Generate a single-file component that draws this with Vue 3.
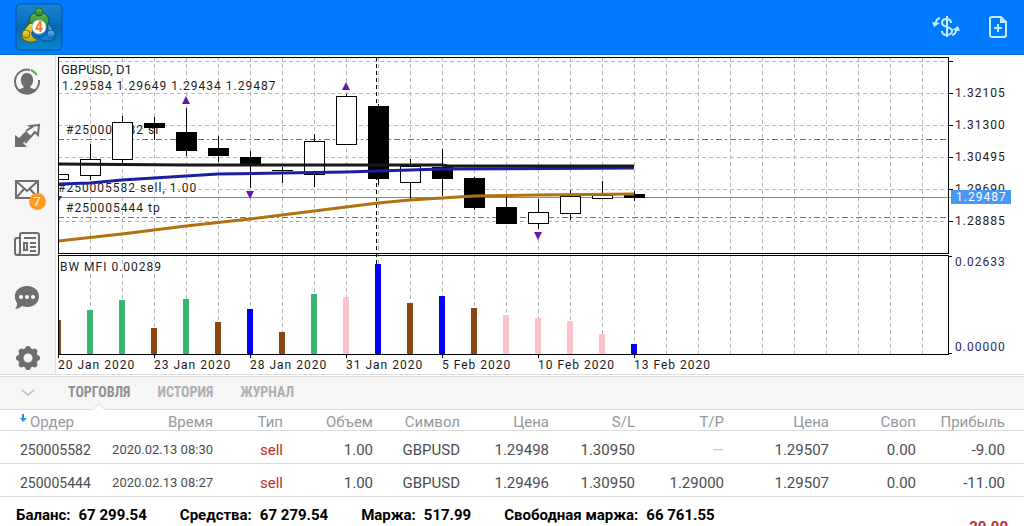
<script setup>
const candles = [
  { x: 58, top: 174, bottom: 179, up: true, high: 174, low: 179 },
  { x: 90, top: 159, bottom: 175, up: true, high: 144, low: 179 },
  { x: 122, top: 122, bottom: 159, up: true, high: 116, low: 163 },
  { x: 154, top: 123, bottom: 127, up: false, high: 117, low: 139 },
  { x: 186, top: 132, bottom: 150, up: false, high: 108, low: 155 },
  { x: 218, top: 148, bottom: 155, up: false, high: 136, low: 161 },
  { x: 250, top: 157, bottom: 164, up: false, high: 151, low: 187 },
  { x: 282, top: 170, bottom: 170, up: false, high: 167, low: 182 },
  { x: 314, top: 141, bottom: 174, up: true, high: 134, low: 186 },
  { x: 346, top: 96, bottom: 144, up: true, high: 94, low: 144 },
  { x: 378, top: 106, bottom: 178, up: false, high: 104, low: 184 },
  { x: 410, top: 166, bottom: 182, up: true, high: 159, low: 198 },
  { x: 442, top: 167, bottom: 178, up: false, high: 149, low: 195 },
  { x: 474, top: 178, bottom: 207, up: false, high: 177, low: 209 },
  { x: 506, top: 207, bottom: 223, up: false, high: 197, low: 223 },
  { x: 538, top: 212, bottom: 223, up: true, high: 199, low: 228 },
  { x: 570, top: 196, bottom: 213, up: true, high: 190, low: 219 },
  { x: 602, top: 195, bottom: 198, up: true, high: 181, low: 198 },
  { x: 634, top: 194, bottom: 197, up: false, high: 191, low: 200 },
]

const green = '#3cb371'
const brown = '#8b4513'
const blue = '#0000ff'
const pink = '#ffc0cb'
const volumes = [
  [320, brown], [310, green], [300, green], [328, brown], [299, green],
  [322, brown], [309, blue], [332, brown], [294, green], [297, pink],
  [264, blue], [303, brown], [296, blue], [308, brown], [315, pink],
  [318, pink], [321, pink], [334, pink], [344, blue],
].map(([y, color], i) => ({ x: 55 + i * 32, y, color }))

const gridX = Array.from({ length: 27 }, (_, i) => 90 + i * 32)
const gridY = Array.from({ length: 6 }, (_, i) => 61 + i * 32)

const prices = ['1.32105', '1.31300', '1.30495', '1.29690', '1.28885']
const dates = ['20 Jan 2020', '23 Jan 2020', '28 Jan 2020', '31 Jan 2020', '5 Feb 2020', '10 Feb 2020', '13 Feb 2020']

const fractals = [
  'M182 104h8l-4-8z', 'M342 90h8l-4-8z',
  'M54 196h8l-4 7z', 'M246 191h8l-4 8z', 'M534 232h8l-4 8z',
]

const teeth = Array.from({ length: 8 }, (_, i) => i * 45)

const widths = [98, 123, 70, 90, 87, 89, 86, 89, 105, 87, 100]
const headings = ['Ордер', 'Время', 'Тип', 'Объем', 'Символ', 'Цена', 'S/L', 'T/P', 'Цена', 'Своп', 'Прибыль']
const orders = [
  ['250005582', '2020.02.13 08:30', 'sell', '1.00', 'GBPUSD', '1.29498', '1.30950', '—', '1.29507', '0.00', '-9.00'],
  ['250005444', '2020.02.13 08:27', 'sell', '1.00', 'GBPUSD', '1.29496', '1.30950', '1.29000', '1.29507', '0.00', '-11.00'],
]
const summary = [
  ['Баланс:', '67 299.54'], ['Средства:', '67 279.54'],
  ['Маржа:', '517.99'], ['Свободная маржа:', '66 761.55'],
]
</script>

<template>
  <div class="app">
    <header class="topbar">
      <svg class="logo" width="48" height="48" viewBox="0 0 48 48" role="img" aria-label="MetaTrader 4">
        <defs>
          <linearGradient id="tile" x1="0" y1="0" x2="0" y2="1">
            <stop offset="0" stop-color="#1786d2" /><stop offset=".55" stop-color="#0867b4" /><stop offset="1" stop-color="#0788cf" />
          </linearGradient>
          <linearGradient id="leaf" x1="0" y1="0" x2="0" y2="1">
            <stop offset="0" stop-color="#69bd4a" /><stop offset="1" stop-color="#187b35" />
          </linearGradient>
          <linearGradient id="sun" x1="0" y1="0" x2="0" y2="1">
            <stop offset="0" stop-color="#f3dc3b" /><stop offset="1" stop-color="#b8a51c" />
          </linearGradient>
          <linearGradient id="water" x1="0" y1="0" x2="0" y2="1">
            <stop offset="0" stop-color="#66bdf0" /><stop offset="1" stop-color="#1671c4" />
          </linearGradient>
        </defs>
        <rect x="1" y="1" width="46" height="46" rx="4" fill="url(#tile)" stroke="#0755a5" />
        <path d="M14 26V19c0-6 4-10 10-10s10 4 10 10v7l-5-6c-3-4-7-4-10 0z" fill="url(#leaf)" stroke="#0d4f45" />
        <path d="M15 20l5 1-3 8c-1 4 2 6 6 8-4 3-10 3-14 0-4-3-3-7-1-9z" fill="url(#sun)" stroke="#35551f" />
        <path d="M33 20l6 8c4 5 1 9-5 10-4 1-8-1-11-4 7 1 9-2 10-6z" fill="url(#water)" stroke="#064f96" />
        <circle cx="24" cy="9" r="4" fill="url(#leaf)" stroke="#12663b" />
        <circle cx="11" cy="31" r="4" fill="url(#sun)" stroke="#6c741b" />
        <circle cx="36" cy="31" r="4" fill="url(#water)" stroke="#145f9f" />
        <circle cx="24" cy="24" r="7" fill="#fff" stroke="#bbc" />
        <text x="24" y="29" class="logo-mark">4</text>
      </svg>
      <div class="actions">
        <button aria-label="Торговать">
          <svg width="28" height="24" viewBox="0 0 28 24" fill="none" stroke="#c5eaff" stroke-width="2">
            <path d="M19 8c0-3-2-4-5-4s-4 2-4 4 2 3 5 4 5 2 5 4-2 4-5 4-5-1-5-4M15 1v21" />
            <path d="M8 3Q4 4 4 8M20 20q4-1 4-5" />
            <path d="M0 7l8 1-6 4zM28 16l-8-1 6-4z" fill="#c5eaff" stroke="none" />
          </svg>
        </button>
        <button aria-label="Новый ордер">
          <svg width="20" height="24" viewBox="0 0 20 24" fill="none" stroke="#c5eaff" stroke-width="2">
            <path d="M4 2h9l5 5v13q0 2-2 2H4q-2 0-2-2V4q0-2 2-2zM10 9v8M6 13h8" /><path d="M12 2v6h6z" fill="#c5eaff" stroke="none" />
          </svg>
        </button>
      </div>
    </header>

    <main class="workspace">
      <nav class="sidebar">
        <button aria-label="Счета">
          <svg width="28" height="28" viewBox="0 0 28 28">
            <path d="M17 2A12 12 0 1 0 26 14" fill="none" stroke="#6e6e6e" stroke-width="2" />
            <path d="M26 14v-2" stroke="#6e6e6e" stroke-width="2" />
            <path d="M18 2q4 2 6 5" fill="none" stroke="#45b72d" stroke-width="2" />
            <path d="M5 22c2-2 5-1 6-3-5-4-4-14 3-14s8 10 3 14c1 2 4 1 6 3q-9 8-18 0z" fill="#6e6e6e" />
          </svg>
        </button>
        <button aria-label="Торговля">
          <svg width="28" height="28" viewBox="0 0 28 28">
            <path d="M2 25V13l4 3 7-7 5 5-8 7 4 4z" fill="#6e6e6e" />
            <path d="M13 9l6-4-2-1 9-1-1 10-3-3-10 11" fill="none" stroke="#6e6e6e" stroke-width="2" />
          </svg>
        </button>
        <button aria-label="Почта" class="mail">
          <svg width="28" height="28" viewBox="0 0 28 28" fill="none" stroke="#6e6e6e" stroke-width="2">
            <path d="M3 5h22v17H3zM3 5l11 10L25 5M3 22l8-9M25 22l-8-9" />
          </svg>
          <span class="badge">7</span>
        </button>
        <button aria-label="Новости">
          <svg width="28" height="28" viewBox="0 0 28 28" fill="none" stroke="#6e6e6e" stroke-width="2">
            <path d="M6 8H4q-2 0-2 2v13q0 2 2 2h20q2 0 2-2V5q0-2-2-2H9Q7 3 7 5v17q0 3-3 3M11 8h12M17 13h6M17 17h6M17 21h6M11 13h3v7h-3z" />
          </svg>
        </button>
        <button aria-label="Чат">
          <svg width="28" height="28" viewBox="0 0 28 28">
            <path d="M14 2c16 0 16 21 0 21-2 0-4-1-5-1-2 2-5 3-7 3 2-2 2-4 2-6C-1 12 3 2 14 2z" fill="#6e6e6e" />
            <g fill="#fff"><circle cx="8" cy="13" r="2" /><circle cx="14" cy="13" r="2" /><circle cx="20" cy="13" r="2" /></g>
          </svg>
        </button>
        <button aria-label="Настройки" class="settings">
          <svg width="28" height="28" viewBox="0 0 28 28">
            <circle cx="15" cy="14" r="7.25" fill="none" stroke="#6e6e6e" stroke-width="5.5" />
            <circle v-for="a in teeth" :key="a" cx="15" cy="4.8" r="2.8" fill="#6e6e6e" :transform="`rotate(${a} 15 14)`" />
          </svg>
        </button>
      </nav>

      <svg class="chart" viewBox="56 55 968 319" role="img" aria-label="GBPUSD, D1">
        <clipPath id="plot"><path d="M58 57h891v298H58z" /></clipPath>
        <g class="crisp grid">
          <path v-for="x in gridX" :key="x" :d="`M${x}.5 57V354`" />
          <path v-for="y in gridY" :key="y" :d="`M58 ${y}.5H948`" />
        </g>
        <path class="crisp cursor" d="M376.5 57V354" />
        <path class="levels" d="M58 139.5H948M58 217.5H948" />
        <rect class="bid" x="58" y="197" width="893" height="1" />

        <g class="caption">
          <text class="symbol" x="61" y="74">GBPUSD, D1</text>
          <text x="62" y="90">1.29584 1.29649 1.29434 1.29487</text>
          <text x="66" y="134">#250005582 sl</text>
          <text x="58" y="192">#250005582 sell, 1.00</text>
          <text x="66" y="212">#250005444 tp</text>
          <text x="60" y="271">BW MFI 0.00289</text>
        </g>

        <g clip-path="url(#plot)">
          <g v-for="c in candles" :key="c.x" class="crisp candle">
            <path :d="`M${c.x}.5 ${c.high}V${c.low + 1}`" />
            <path v-if="c.top === c.bottom" :d="`M${c.x - 10} ${c.top}.5h21`" />
            <rect v-else :x="c.x - 9.5" :y="c.top + 0.5" width="20" :height="c.bottom - c.top" :fill="c.up ? '#fff' : '#000'" />
          </g>
          <g class="averages">
            <path stroke="#1c1fa0" d="M58 184L90 183 122 180 154 178 186 176 218 174 282 173 346 172 410 170 442 169 634 168" />
            <path stroke="#16181c" d="M58 164L186 165H442L448 166H634" />
            <path stroke="#b17012" d="M58 241L122 234 186 226 250 219 314 211 378 203 410 200 442 198 474 196 538 195 634 194" />
          </g>
          <path v-for="d in fractals" :key="d" :d="d" fill="#6718a8" />
          <rect v-for="v in volumes" :key="v.x" :x="v.x" :y="v.y" width="6" :height="354 - v.y" :fill="v.color" />
        </g>

        <g class="crisp frame">
          <path d="M58.5 57.5H948.5V253.5H58.5zM58.5 255.5H948.5V354.5H58.5zM949 256.5H952M949 353.5H952" />
          <path v-for="y in gridY" :key="y" :d="`M949 ${y}.5H953`" />
          <path v-for="(d, i) in dates" :key="d" :d="`M${58 + i * 96}.5 354V358`" />
        </g>
        <g class="scale">
          <text v-for="(p, i) in prices" :key="p" x="955" :y="97 + i * 32">{{ p }}</text>
          <text x="955" y="266" class="volume">0.02633</text>
          <text x="955" y="351" class="volume">0.00000</text>
          <text v-for="(d, i) in dates" :key="d" :x="58 + i * 96" y="369">{{ d }}</text>
          <rect x="951" y="190" width="60" height="14" fill="#4797f5" />
          <text x="956" y="201" class="current">1.29487</text>
        </g>
      </svg>
    </main>

    <section class="terminal">
      <nav class="tabs">
        <button class="collapse" aria-label="Свернуть">
          <svg width="14" height="8" viewBox="0 0 14 8" fill="none" stroke="#c4c6c8" stroke-width="2"><path d="M1 1l6 5 6-5" /></svg>
        </button>
        <button class="tab active">ТОРГОВЛЯ</button>
        <button class="tab">ИСТОРИЯ</button>
        <button class="tab">ЖУРНАЛ</button>
      </nav>
      <table>
        <colgroup><col v-for="(w, i) in widths" :key="i" :style="{ width: w + 'px' }"></colgroup>
        <thead>
          <tr>
            <th v-for="(h, i) in headings" :key="i" scope="col">
              <svg v-if="i === 0" width="8" height="9" viewBox="0 0 8 9"><path d="M2 0h2v4h3L3 8 0 4h2z" fill="#2f8de8" /></svg>{{ h }}
            </th>
          </tr>
        </thead>
        <tbody>
          <tr v-for="row in orders" :key="row[0]">
            <td v-for="(cell, i) in row" :key="i" :class="{ empty: cell === '—' }">{{ cell }}</td>
          </tr>
        </tbody>
      </table>
      <footer class="summary">
        <span v-for="[label, value] in summary" :key="label" class="total"><span>{{ label }}</span><span>{{ value }}</span></span>
        <span class="profit">-20.00</span>
      </footer>
    </section>
  </div>
</template>

<style>
body { margin: 0; overflow: hidden; background: #fff; }
</style>

<style scoped>
.app { height: 100vh; overflow: hidden; background: #fff; color: #4b4d50; font-family: Roboto, "Liberation Sans", sans-serif; }
button { border: 0; padding: 0; background: none; font: inherit; color: inherit; }
svg { display: block; }
.topbar { display: flex; align-items: center; justify-content: space-between; box-sizing: border-box; height: 55px; padding: 0 16px 0 15px; background: #007aff; border-bottom: 1px solid #0a6fdc; }
.logo-mark { font: bold 14px Roboto, sans-serif; fill: #f17b1b; text-anchor: middle; }
.actions { display: flex; gap: 28px; }
.workspace { display: flex; align-items: stretch; }
.sidebar { flex: none; display: flex; flex-direction: column; align-items: center; gap: 26px; box-sizing: border-box; width: 56px; padding: 13px 2px 2px 0; background: #f6f6f6; border-right: 1px solid #dcdcdc; }
.settings { margin-top: auto; }
.mail { position: relative; }
.badge { position: absolute; right: -5px; bottom: -6px; width: 17px; height: 17px; border-radius: 50%; background: #ff9a1c; color: #fff; font-size: 13px; line-height: 17px; text-align: center; }
.chart { flex: 1; min-width: 0; }
.crisp { shape-rendering: crispEdges; fill: none; }
.grid { stroke: #b9b9b9; stroke-dasharray: 4 3; }
.cursor { stroke: #000; stroke-dasharray: 4 3; }
.levels { fill: none; stroke: #c45a20; stroke-dasharray: 6 3 2 3; }
.bid { fill: #4a9ad4; }
.candle { stroke: #000; }
.averages { fill: none; stroke-width: 3; }
.frame { stroke: #000; }
.caption, .scale { font-size: 12px; letter-spacing: 1px; fill: #1c1c1c; }
.caption text { paint-order: stroke; stroke: #fff; stroke-width: 2px; }
.caption .symbol { font-size: 13px; letter-spacing: normal; }
.scale .current { fill: #fff; }
.scale .volume { fill: #2b285c; }
.terminal { border-top: 1px solid #dcdcdc; }
.tabs { display: flex; align-items: center; gap: 27px; box-sizing: border-box; height: 34px; margin-top: 1px; padding: 0 21px; background: #f6f6f6; border: solid #dcdcdc; border-width: 1px 0; }
.collapse { margin-right: 6px; }
.tab { position: relative; align-self: stretch; padding-bottom: 2px; color: #adafb1; font: bold 14px "Roboto Condensed", "Liberation Sans Narrow", Roboto, sans-serif; }
.tab.active { color: #8e9194; }
.tab.active::after { content: ""; position: absolute; left: 50%; bottom: -6px; width: 9px; height: 9px; margin-left: -5px; background: #fff; border: solid #dcdcdc; border-width: 1px 0 0 1px; transform: rotate(45deg); clip-path: polygon(0 0, 100% 0, 0 100%); }
table { width: 100%; table-layout: fixed; border-collapse: separate; border-spacing: 0; font-size: 15px; }
th, td { box-sizing: border-box; padding: 0 8px 0 0; border-bottom: 1px solid #dcdcdc; text-align: right; white-space: nowrap; }
th { height: 21px; padding-top: 4px; line-height: 16px; font-weight: normal; color: #96989b; }
td { height: 33px; padding-top: 5px; line-height: 20px; }
th:first-child, td:first-child { padding-left: 20px; text-align: left; }
th:first-child svg { display: inline-block; margin-right: 2px; vertical-align: 4px; }
td:first-child { font-size: 14px; }
td:nth-child(2) { font-size: 13px; }
td:nth-child(3) { color: #bf2f2f; }
td.empty { color: #c8c8c8; }
th:last-child, td:last-child { padding-right: 19px; }
.summary { display: flex; gap: 33px; padding: 8px 16px; font-size: 15px; font-weight: bold; line-height: 20px; color: #000; white-space: nowrap; }
.total { display: flex; gap: 8px; align-self: flex-start; }
.profit { margin-left: auto; padding-top: 12px; color: #c22f2f; }
</style>
